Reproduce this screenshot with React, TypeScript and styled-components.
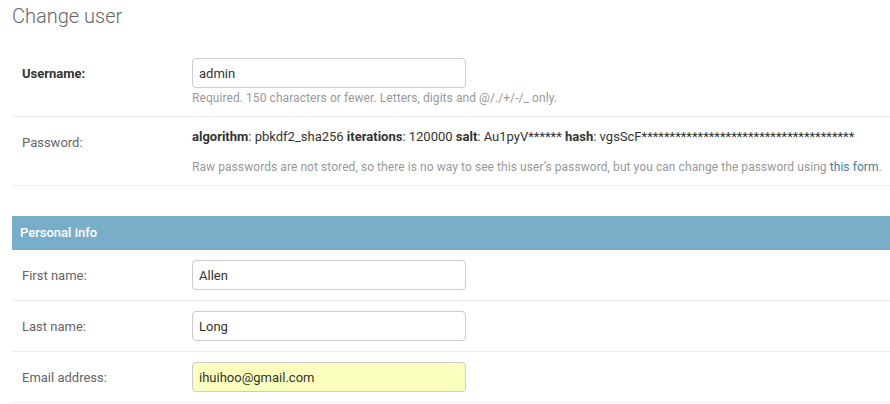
import styled, { createGlobalStyle } from 'styled-components';

const GlobalStyle = createGlobalStyle`
  html, body {
    margin: 0;
    padding: 0;
    background: #fff;
    font-family: Roboto, "Liberation Sans", sans-serif;
    color: #333;
    font-size: 13px;
  }
`;

const Content = styled.div`
  padding: 0 0 0 12px;
  width: 878px;
  overflow: hidden;
`;

const PageTitle = styled.h1`
  margin: 0;
  padding: 4px 0 0;
  height: 48px;
  box-sizing: border-box;
  font-size: 20px;
  line-height: 24px;
  font-weight: 300;
  color: #666;
`;

const Fieldset = styled.fieldset`
  margin: 0;
  padding: 0;
  border: 0;
  min-width: 0;
`;

const ModuleHeader = styled.h2`
  margin: 30px 0 0;
  padding: 8px;
  height: 34px;
  box-sizing: border-box;
  font-size: 13px;
  line-height: 18px;
  font-weight: 500;
  color: #fff;
  background: #79aec8;
`;

const Row = styled.div`
  display: flex;
  flex-direction: column;
  padding: 10px;
  border-bottom: 1px solid #eee;
`;

const Line = styled.div`
  display: flex;
  align-items: flex-start;
`;

const Label = styled.label<{ $required?: boolean }>`
  flex: 0 0 160px;
  padding: 6px 10px 0 0;
  line-height: 20px;
  font-size: 13px;
  color: ${(p) => (p.$required ? '#333' : '#666')};
  font-weight: ${(p) => (p.$required ? 700 : 400)};
`;

const Field = styled.div`
  display: flex;
  flex-direction: column;
  flex: 1;
  min-width: 0;
`;

const TextInput = styled.input<{ $autofill?: boolean }>`
  width: 274px;
  height: 30px;
  box-sizing: border-box;
  padding: 5px 6px;
  margin: 0;
  border: 1px solid #ccc;
  border-radius: 4px;
  font-family: Roboto, "Liberation Sans", sans-serif;
  font-size: 13px;
  color: #333;
  background: ${(p) => (p.$autofill ? 'rgb(250, 255, 189)' : '#fff')};
  &:focus {
    outline: none;
    border-color: #999;
  }
`;

const ReadOnly = styled.div`
  line-height: 20px;
  font-size: 13px;
  color: #333;
  white-space: nowrap;
  strong {
    font-weight: 700;
  }
`;

const Help = styled.div<{ $gap?: number }>`
  padding-top: ${(p) => p.$gap ?? 2}px;
  font-size: 12px;
  line-height: 16px;
  letter-spacing: 0.07px;
  color: #999;
  white-space: nowrap;
  a {
    color: #447e9b;
    text-decoration: none;
  }
`;

const hashMask = '*'.repeat(38);

export default function App() {
  return (
    <>
      <GlobalStyle />
      <Content>
        <PageTitle>Change user</PageTitle>
        <Fieldset>
          <Row>
            <Line>
              <Label $required>Username:</Label>
              <Field>
                <TextInput defaultValue="admin" />
                <Help>Required. 150 characters or fewer. Letters, digits and @/./+/-/_ only.</Help>
              </Field>
            </Line>
          </Row>
          <Row>
            <Line>
              <Label>Password:</Label>
              <Field>
                <ReadOnly>
                  <strong>algorithm</strong>: pbkdf2_sha256 <strong>iterations</strong>: 120000{' '}
                  <strong>salt</strong>: Au1pyV****** <strong>hash</strong>: vgsScF{hashMask}
                </ReadOnly>
                <Help $gap={12}>
                  Raw passwords are not stored, so there is no way to see this user’s password, but you can
                  change the password using <a href="#">this form</a>.
                </Help>
              </Field>
            </Line>
          </Row>
        </Fieldset>
        <Fieldset>
          <ModuleHeader>Personal info</ModuleHeader>
          <Row>
            <Line>
              <Label>First name:</Label>
              <Field>
                <TextInput defaultValue="Allen" />
              </Field>
            </Line>
          </Row>
          <Row>
            <Line>
              <Label>Last name:</Label>
              <Field>
                <TextInput defaultValue="Long" />
              </Field>
            </Line>
          </Row>
          <Row>
            <Line>
              <Label>Email address:</Label>
              <Field>
                <TextInput $autofill defaultValue="ihuihoo@gmail.com" />
              </Field>
            </Line>
          </Row>
        </Fieldset>
      </Content>
    </>
  );
}
